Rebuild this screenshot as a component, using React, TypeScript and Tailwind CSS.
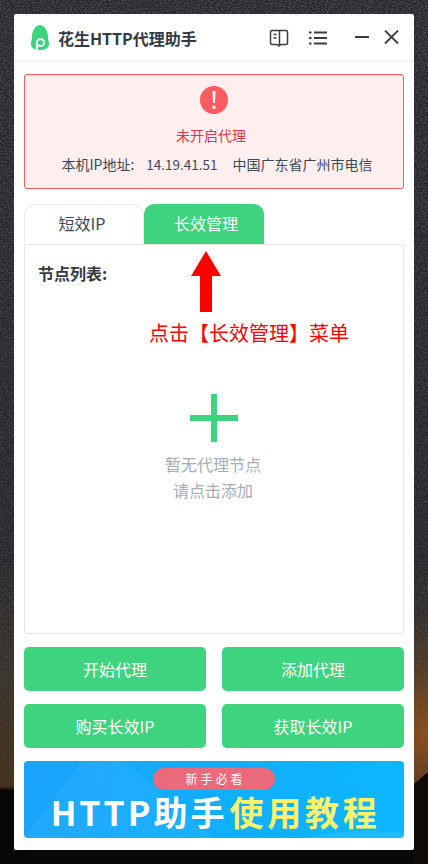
import React from "react";

const FONT = "font-['Noto_Sans_CJK_SC','Noto_Sans',sans-serif]";

function Logo() {
  return (
    <svg width="18" height="25" viewBox="0 0 18 25" className="shrink-0">
      <path d="M9 0C13 0 17 5 17 12C17 14 18 16 18 19C18 23 14 25 9 25C4 25 0 23 0 19C0 16 1 14 1 12C1 5 5 0 9 0Z" fill="#3dd37f" />
      <circle cx="9.5" cy="17.5" r="3.6" fill="none" stroke="#fff" strokeWidth="2" />
      <path d="M5.9 17.5V25" stroke="#fff" strokeWidth="2" />
    </svg>
  );
}

function Backdrop() {
  return (
    <svg className="absolute inset-0" width="428" height="864" viewBox="0 0 428 864">
      <defs>
        <filter id="grain">
          <feTurbulence type="fractalNoise" baseFrequency="0.55 0.8" numOctaves="3" seed="7" />
          <feColorMatrix values="0 0 0 0 1  0 0 0 0 1  0 0 0 0 1  0.9 0 0 0 -0.32" />
        </filter>
        <linearGradient id="grainFade" x1="0" y1="0" x2="0" y2="1">
          <stop offset="0" stopColor="#fff" stopOpacity="0.5" />
          <stop offset="0.7" stopColor="#fff" stopOpacity="0.3" />
          <stop offset="0.9" stopColor="#fff" stopOpacity="0.08" />
          <stop offset="0.92" stopColor="#fff" stopOpacity="0" />
        </linearGradient>
        <mask id="grainMask">
          <rect width="428" height="864" fill="url(#grainFade)" />
        </mask>
      </defs>
      <rect width="428" height="864" filter="url(#grain)" mask="url(#grainMask)" />
      <path d="M0 790L30 791V864H0Z" fill="#080706" />
      <path d="M414 784L428 772V864H414Z" fill="#0f0b09" />
    </svg>
  );
}

function GreenButton({ children }: { children: React.ReactNode }) {
  return (
    <button className="flex h-[44px] items-center justify-center rounded-[5px] bg-[#3dd37f] text-[16px] text-white">
      {children}
    </button>
  );
}

export default function App() {
  return (
    <div
      className={`relative flex h-[864px] w-[428px] justify-center overflow-hidden bg-[radial-gradient(90px_120px_at_100%_735px,#8a4c1c_0%,rgba(90,60,35,0.6)_60%,rgba(60,50,40,0)_100%),linear-gradient(180deg,#26262a_0%,#26262a_65%,#38312a_78%,#43321e_91%,#090807_91.500%,#080808_100%)] pt-[14px] ${FONT}`}
    >
      <Backdrop />
      <div className="relative flex h-[836px] w-[400px] flex-col rounded-[2px] bg-white">
        <header className="flex h-[48px] shrink-0 items-center border-b border-[#f2f3f5] pl-[17px] pr-[15px]">
          <Logo />
          <h1 className="ml-[9px] text-[16px] font-bold leading-none text-[#333a45]">花生HTTP代理助手</h1>
          <div className="ml-auto flex items-center text-[#3c3c3c]">
            <svg width="20" height="20" viewBox="0 0 20 20" fill="none" stroke="currentColor" strokeWidth="1.5">
              <path d="M10.5 2.5H3a1.5 1.5 0 0 0-1.5 1.5v11A1.5 1.5 0 0 0 3 16.500h5l2 1.500 2-1.500h5a1.500 1.500 0 0 0 1.500-1.500V4A1.500 1.500 0 0 0 17 2.500h-6.500V17" />
              <path d="M4.500 6.500h3M4.500 10h3" />
            </svg>
            <svg className="ml-[20px]" width="18" height="14" viewBox="0 0 18 14" fill="currentColor">
              <rect x="0" y="0.500" width="2.500" height="2" />
              <rect x="5" y="0.500" width="13" height="2" />
              <rect x="0" y="6" width="2.500" height="2" />
              <rect x="5" y="6" width="13" height="2" />
              <rect x="0" y="11.500" width="2.500" height="2" />
              <rect x="5" y="11.500" width="13" height="2" />
            </svg>
            <svg className="ml-[28px]" width="15" height="14" viewBox="0 0 15 14" fill="currentColor">
              <rect x="0" y="5" width="14" height="2" />
            </svg>
            <svg className="ml-[14px]" width="15" height="15" viewBox="0 0 15 15" fill="none" stroke="currentColor" strokeWidth="1.800">
              <path d="M1 0.500L14 13.500M14 0.500L1 13.500" />
            </svg>
          </div>
        </header>

        <div className="flex flex-1 flex-col px-[10px] pt-[12px]">
          <section className="flex h-[115px] shrink-0 flex-col items-center rounded-[3px] border border-[#fb5c64] bg-[#ffefef]">
            <div className="mt-[11px] flex h-[28px] w-[28px] items-center justify-center rounded-full bg-[#ff5c62] text-white">
              <svg width="4" height="18" viewBox="0 0 4 18" fill="currentColor">
                <path d="M0.500 0H3.500L3 12H1ZM2 14.500A1.700 1.700 0 1 1 2 17.900A1.700 1.700 0 1 1 2 14.500Z" />
              </svg>
            </div>
            <p className="mt-[9px] pr-[6px] text-[14px] leading-[24px] text-[#d93a4a]">未开启代理</p>
            <p className="mt-[5px] flex pl-[6px] text-[14px] leading-[24px] text-[#3e4855]">
              <span>本机IP地址:</span>
              <span className="ml-[12px] text-[13.500px]">14.19.41.51</span>
              <span className="ml-[15px]">中国广东省广州市电信</span>
            </p>
          </section>

          <div className="relative mt-[15px] flex h-[40px] shrink-0">
            <button className="h-[41px] w-[120px] rounded-t-[11px] border-l border-t border-r border-[#ececec] pb-[4px] pr-[4px] text-[16px] text-[#3e4855]">
              短效IP
            </button>
            <button className="h-[40px] w-[120px] rounded-t-[10px] bg-[#3dd37f] pb-[3px] pl-[4px] text-[16px] text-white">长效管理</button>
          </div>

          <main className="relative flex h-[390px] shrink-0 flex-col rounded-[3px] border border-[#e6e6e6] px-[13px] pt-[16px]">
            <h2 className="text-[16px] font-bold leading-[24px] text-[#333a45]">节点列表:</h2>
            <div className="absolute left-[166px] top-[6px]">
              <svg width="30" height="62" viewBox="0 0 30 62" fill="#ff0000">
                <path d="M15 0L30 25H21V61H9V25H0Z" />
              </svg>
            </div>
            <p className="absolute left-[124px] top-[74px] text-[20px] leading-[28px] whitespace-nowrap text-[#ff0000]">
              点击【长效管理】菜单
            </p>
            <div className="mt-[109px] flex flex-col items-center">
              <svg width="48" height="48" viewBox="0 0 48 48" fill="#3dd37f">
                <rect x="0" y="21" width="48" height="6" />
                <rect x="21" y="0" width="6" height="48" />
              </svg>
              <p className="mt-[9px] pr-[2px] text-[16px] leading-[26px] text-[#a6acb6]">暂无代理节点</p>
              <p className="pr-[2px] text-[16px] leading-[26px] text-[#a6acb6]">请点击添加</p>
            </div>
          </main>

          <div className="mt-[13px] grid shrink-0 grid-cols-2 gap-x-[16px] gap-y-[13px]">
            <GreenButton>开始代理</GreenButton>
            <GreenButton>添加代理</GreenButton>
            <GreenButton>购买长效IP</GreenButton>
            <GreenButton>获取长效IP</GreenButton>
          </div>

          <div className="relative mt-[13px] flex h-[77px] shrink-0 flex-col items-center overflow-hidden rounded-[4px] bg-[linear-gradient(100deg,#1aa3fb_0%,#11aefe_50%,#0cb6ff_100%)]">
            <svg className="absolute inset-0" width="380" height="77" viewBox="0 0 380 77">
              <path d="M0 77L58 0H100L190 77Z" fill="#ffffff" opacity="0.04" />
              <path d="M280 77Q330 65 380 72V77Z" fill="#ffffff" opacity="0.08" />
            </svg>
            <span className="relative mt-[7px] flex h-[22px] w-[122px] items-center justify-center rounded-full bg-[#ea6a7c] pl-[3px] text-[12px] leading-none tracking-[3px] text-white">
              新手必看
            </span>
            <p className="relative mt-[2px] whitespace-nowrap pl-[3px] text-[34px] font-bold leading-[40px] tracking-[3px] text-white">
              HTTP助手<span className="ml-[2px] tracking-[3.700px] text-[#fdf26b]">使用教程</span>
            </p>
          </div>
        </div>
      </div>
    </div>
  );
}
